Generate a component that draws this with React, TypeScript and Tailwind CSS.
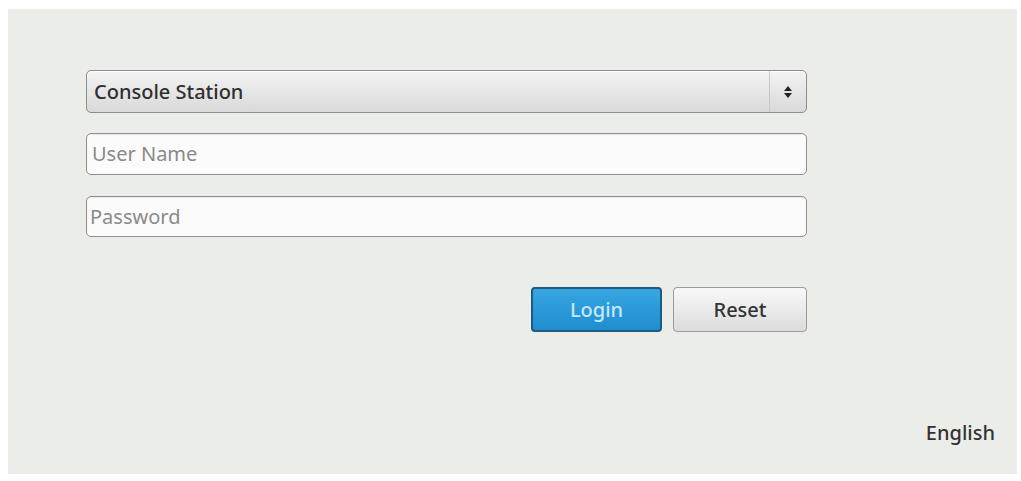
export default function App() {
  return (
    <div className="w-[1021px] h-[481px] bg-white pt-[9px] pl-[8px] font-['Noto_Sans',sans-serif]">
      <div className="w-[1009px] h-[465px] bg-[#ebede9] flex flex-col pl-[78px] pt-[61px] pr-[22px]">
        <div className="w-[721px] flex flex-col">
          <div className="h-[43px] rounded-[5px] border border-[#8e8e8e] bg-gradient-to-b from-[#f3f3f3] to-[#d8d9d8] flex items-center shadow-[inset_0_1px_0_#fff]">
            <span className="flex-1 pl-[7px] text-[20px] text-[#2f2f2f] font-medium">Console Station</span>
            <div className="w-[37px] h-full border-l border-[#c8c8c8] flex items-center justify-center">
              <svg width="10" height="14" viewBox="0 0 10 14">
                <path d="M5 1 L9 6 L1 6 Z" fill="#222" />
                <path d="M5 13 L9 8 L1 8 Z" fill="#222" />
              </svg>
            </div>
          </div>
          <div className="mt-[20px] h-[42px] rounded-[5px] border border-[#8f8f8f] bg-[#fafbfa] flex items-center shadow-[inset_0_1px_1px_rgba(0,0,0,0.08)]">
            <span className="pl-[5px] text-[20px] text-[#8a8a8a]">User Name</span>
          </div>
          <div className="mt-[21px] h-[41px] rounded-[5px] border border-[#8f8f8f] bg-[#fafbfa] flex items-center shadow-[inset_0_1px_1px_rgba(0,0,0,0.08)]">
            <span className="pl-[3px] text-[20px] text-[#8a8a8a]">Password</span>
          </div>
          <div className="mt-[50px] flex justify-end gap-[11px]">
            <button className="w-[131px] h-[45px] rounded-[4px] border-2 border-[#1f5a80] bg-gradient-to-b from-[#36a6e2] to-[#1f8dcf] text-[20px] text-[#c4e9fc] font-medium">
              Login
            </button>
            <button className="w-[134px] h-[45px] rounded-[4px] border border-[#9a9a9a] bg-gradient-to-b from-[#f8f8f8] to-[#dcdcdc] text-[20px] text-[#333] font-medium">
              Reset
            </button>
          </div>
        </div>
        <div className="mt-auto mb-[26px] self-end text-[20px] text-[#333] font-medium">English</div>
      </div>
    </div>
  );
}
